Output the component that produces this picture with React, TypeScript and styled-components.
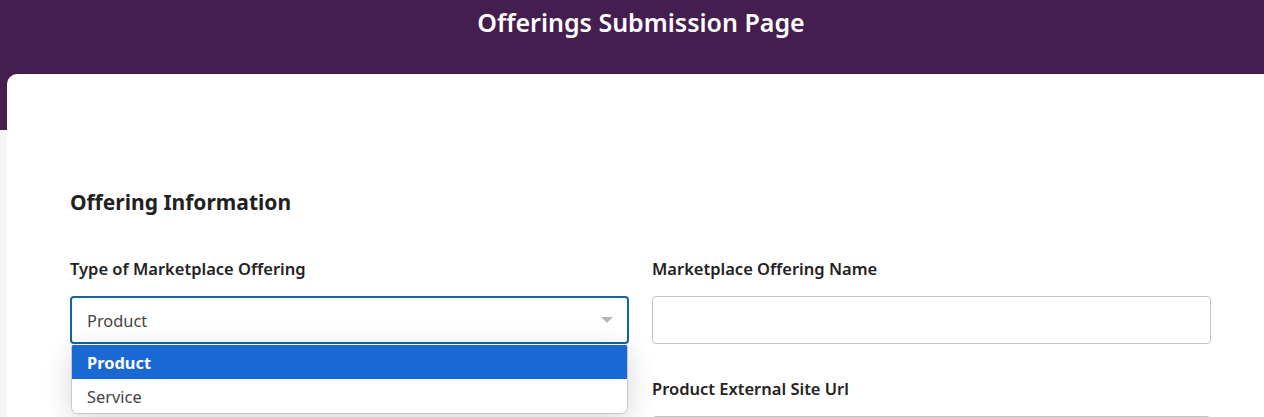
import styled, { createGlobalStyle } from 'styled-components';

const GlobalStyle = createGlobalStyle`
  body {
    margin: 0;
    background: #f8f4f1;
    font-family: "Segoe UI", "Noto Sans", "Open Sans", sans-serif;
    color: #212121;
  }
`

const Header = styled.header`
  height: 130px;
  background: #441e4f;
  color: #fff;
  text-align: center;
  box-sizing: border-box;
  padding: 4px 0 0 18px;

  h1 {
    margin: 0;
    font-size: 25px;
    font-weight: 600;
    line-height: 36px;
  }
`

const Card = styled.main`
  margin: -56px 0 0 7px;
  min-height: 400px;
  background: #fff;
  border-top-left-radius: 10px;
  padding: 114px 0 0 63px;
  box-sizing: border-box;
`

const SectionTitle = styled.h2`
  margin: 0 0 42px;
  font-size: 21px;
  font-weight: 700;
  line-height: 28px;
  color: #212121;
`

const Grid = styled.div`
  display: grid;
  grid-template-columns: 559px 559px;
  column-gap: 23px;
  row-gap: 34px;
`

const Field = styled.div`
  position: relative;
  display: flex;
  flex-direction: column;
`

const Label = styled.label`
  font-size: 16.5px;
  font-weight: 600;
  line-height: 22px;
  margin-bottom: 16px;
  color: #222;
`

const Control = styled.div<{ $focused?: boolean }>`
  height: 48px;
  box-sizing: border-box;
  border: ${p => (p.$focused ? '2px solid #1264a3' : '1px solid #c4c4c4')};
  border-radius: 4px;
  display: flex;
  align-items: center;
  justify-content: space-between;
  padding: ${p => (p.$focused ? '0 14px 0 15px' : '0 15px 0 16px')};
  font-size: 16.4px;
  color: #444;
  background: #fff;
`

const Caret = styled.span`
  width: 0;
  height: 0;
  border-left: 6px solid transparent;
  border-right: 6px solid transparent;
  border-top: 6px solid #b8b8b8;
`

const Menu = styled.ul`
  position: absolute;
  top: 87px;
  left: 1px;
  right: 1px;
  margin: 0;
  padding: 0;
  list-style: none;
  background: #fff;
  border: 1px solid #c8c8c8;
  border-top: none;
  border-radius: 2px 2px 7px 7px;
  box-shadow: 0 6px 28px rgba(0, 0, 0, 0.16);
  overflow: hidden;
  z-index: 2;
`

const Option = styled.li<{ $active?: boolean }>`
  height: 34px;
  display: flex;
  align-items: center;
  padding-left: 15px;
  font-size: 16.4px;
  font-weight: ${p => (p.$active ? 700 : 400)};
  color: ${p => (p.$active ? '#fff' : '#444')};
  background: ${p => (p.$active ? '#1a68d3' : '#fff')};
`

export default function App() {
  return (
    <>
      <GlobalStyle />
      <Header>
        <h1>Offerings Submission Page</h1>
      </Header>
      <Card>
        <SectionTitle>Offering Information</SectionTitle>
        <Grid>
          <Field>
            <Label>Type of Marketplace Offering</Label>
            <Control $focused>
              <span>Product</span>
              <Caret />
            </Control>
            <Menu>
              <Option $active>Product</Option>
              <Option>Service</Option>
            </Menu>
          </Field>
          <Field>
            <Label>Marketplace Offering Name</Label>
            <Control />
          </Field>
          <Field />
          <Field>
            <Label>Product External Site Url</Label>
            <Control />
          </Field>
        </Grid>
      </Card>
    </>
  )
}
